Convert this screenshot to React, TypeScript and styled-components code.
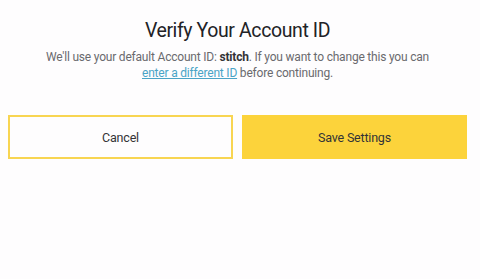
import React from 'react';
import styled, { createGlobalStyle } from 'styled-components';

const GlobalStyle = createGlobalStyle`
  html, body {
    margin: 0;
    padding: 0;
    background: #fefdfe;
  }
  body {
    font-family: Roboto, "Noto Sans", sans-serif;
  }
`;

const Dialog = styled.div`
  width: 459px;
  margin-left: 8px;
  padding-top: 18px;
  box-sizing: border-box;
`;

const Title = styled.h1`
  margin: 0;
  font-size: 19.5px;
  font-weight: 400;
  letter-spacing: -0.4px;
  color: #222226;
  text-align: center;
  line-height: 26px;
`;

const Message = styled.p`
  margin: 6px 0 0;
  font-size: 12px;
  letter-spacing: -0.2px;
  line-height: 15.5px;
  color: #6a6a6e;
  text-align: center;

  strong {
    color: #333336;
    font-weight: 700;
  }
`;

const TextLink = styled.a`
  color: #4aa4c6;
  text-decoration: underline;
  cursor: pointer;
`;

const Actions = styled.div`
  display: grid;
  grid-template-columns: 1fr 1fr;
  gap: 9px;
  margin-top: 34px;
`;

const Button = styled.button<{ $primary?: boolean }>`
  height: 44px;
  box-sizing: border-box;
  font-family: inherit;
  font-size: 12.5px;
  letter-spacing: -0.2px;
  color: #333336;
  cursor: pointer;
  border: 2px solid #f8d552;
  background: ${({ $primary }) => ($primary ? '#fcd33b' : '#fefdfe')};
  ${({ $primary }) => $primary && 'border-color: #fcd33b;'}
`;

const App: React.FC = () => {
  return (
    <>
      <GlobalStyle />
      <Dialog>
        <Title>Verify Your Account ID</Title>
        <Message>
          We'll use your default Account ID: <strong>stitch</strong>. If you want to change this you can
          <br />
          <TextLink>enter a different ID</TextLink> before continuing.
        </Message>
        <Actions>
          <Button>Cancel</Button>
          <Button $primary>Save Settings</Button>
        </Actions>
      </Dialog>
    </>
  );
};

export default App;
